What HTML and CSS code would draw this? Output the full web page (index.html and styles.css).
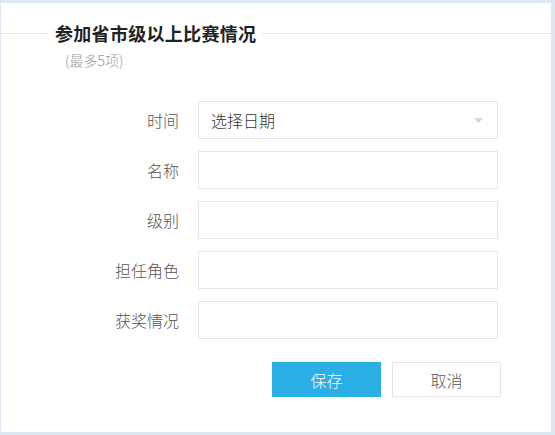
FILE: index.html
```html
<!DOCTYPE html>
<html lang="zh-CN">
<head>
<meta charset="utf-8">
<title>参加省市级以上比赛情况</title>
<link rel="stylesheet" href="styles.css">
</head>
<body>
<div class="panel">
  <div class="legend">
    <span class="line line-left"></span>
    <h2 class="legend-title">参加省市级以上比赛情况</h2>
    <span class="line line-right"></span>
  </div>
  <div class="hint">(最多5项)</div>
  <form class="form">
    <div class="row">
      <label class="label">时间</label>
      <div class="field select">
        <span class="select-text">选择日期</span>
        <svg class="caret" width="9" height="5" viewBox="0 0 9 5"><path d="M0 0H9L4.5 5Z" fill="#d4d4d4"/></svg>
      </div>
    </div>
    <div class="row">
      <label class="label">名称</label>
      <div class="field"></div>
    </div>
    <div class="row">
      <label class="label">级别</label>
      <div class="field"></div>
    </div>
    <div class="row">
      <label class="label">担任角色</label>
      <div class="field"></div>
    </div>
    <div class="row">
      <label class="label">获奖情况</label>
      <div class="field"></div>
    </div>
    <div class="actions">
      <button type="button" class="btn btn-primary">保存</button>
      <button type="button" class="btn btn-default">取消</button>
    </div>
  </form>
</div>
</body>
</html>
```
FILE: styles.css
```css
html, body {
  margin: 0;
  padding: 0;
}
body {
  background: #dde8f5;
  width: 555px;
  height: 435px;
  overflow: hidden;
  font-family: "Noto Sans CJK SC", "Noto Sans", sans-serif;
}
.panel {
  box-sizing: border-box;
  margin: 3px 4px 0 1px;
  width: 550px;
  height: 429px;
  background: #fff;
  padding-top: 18px;
}
.legend {
  display: flex;
  align-items: center;
  height: 24px;
}
.line {
  height: 1px;
  background: #e6e6e6;
}
.line-left {
  width: 47px;
}
.line-right {
  flex: 1;
}
.legend-title {
  margin: 0 6px 0 7px;
  font-size: 18px;
  line-height: 24px;
  font-weight: bold;
  color: #222;
  letter-spacing: 0.3px;
}
.hint {
  margin: 5px 0 0 64px;
  font-size: 14px;
  line-height: 20px;
  font-weight: 300;
  color: #9a9a9a;
}
.form {
  margin-top: 31px;
}
.row {
  display: flex;
  align-items: center;
  margin-bottom: 12px;
}
.label {
  width: 178px;
  text-align: right;
  font-size: 16px;
  font-weight: 300;
  color: #555;
  margin-right: 19px;
}
.field {
  box-sizing: border-box;
  width: 300px;
  height: 38px;
  border: 1px solid #e6e6e6;
  background: #fff;
}
.select {
  display: flex;
  align-items: center;
  justify-content: space-between;
  padding: 0 14px 0 12px;
}
.select-text {
  font-size: 16px;
  font-weight: 300;
  color: #333;
}
.actions {
  display: flex;
  gap: 11px;
  padding-left: 271px;
  margin-top: 23px;
}
.btn {
  box-sizing: border-box;
  width: 109px;
  height: 35px;
  font-family: inherit;
  font-size: 16px;
  font-weight: 300;
  border: 1px solid #e3e3e3;
  padding: 0;
  cursor: pointer;
}
.btn-primary {
  background: #29aee6;
  border-color: #29aee6;
  color: #fff;
}
.btn-default {
  background: #fff;
  color: #555;
}
```
